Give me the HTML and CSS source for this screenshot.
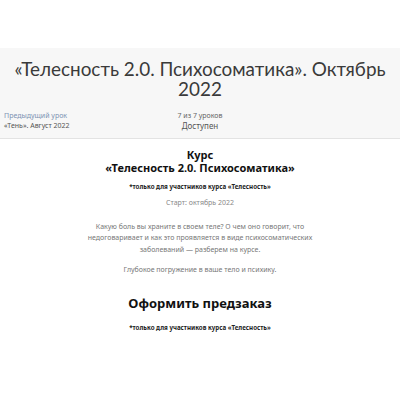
FILE: index.html
```html
<!DOCTYPE html>
<html lang="ru">
<head>
<meta charset="utf-8">
<link rel="stylesheet" href="styles.css">
</head>
<body>
<div class="top-space"></div>
<header class="lesson-head">
  <h1 class="lesson-title">«Телесность 2.0. Психосоматика». Октябрь 2022</h1>
  <div class="lesson-nav">
    <div class="nav-prev">
      <div class="nav-label">Предыдущий урок</div>
      <div class="nav-name">«Тень». Август 2022</div>
    </div>
    <div class="nav-status">
      <div class="status-count">7 из 7 уроков</div>
      <div class="status-state">Доступен</div>
    </div>
    <div class="nav-next"></div>
  </div>
</header>
<main class="content">
  <h2 class="course-title">Курс<br>«Телесность 2.0. Психосоматика»</h2>
  <p class="note">*только для участников курса «Телесность»</p>
  <p class="start">Старт: октябрь 2022</p>
  <p class="desc">Какую боль вы храните в своем теле? О чем оно говорит, что недоговаривает и как это проявляется в виде психосоматических заболеваний — разберем на курсе.</p>
  <p class="desc desc-second">Глубокое погружение в ваше тело и психику.</p>
  <h2 class="order-title">Оформить предзаказ</h2>
  <p class="note note-last">*только для участников курса «Телесность»</p>
</main>
</body>
</html>
```
FILE: styles.css
```css
html, body {
  margin: 0;
  padding: 0;
  background: #ffffff;
  font-family: "Noto Sans", "Open Sans", sans-serif;
  color: #333;
}
.top-space {
  height: 48px;
}
.lesson-head {
  background: #f7f7f7;
  border-bottom: 1px solid #e3e3e3;
  padding: 11px 4px 7px;
}
.lesson-title {
  margin: 0;
  text-align: center;
  font-family: "Lato", "Noto Sans", sans-serif;
  font-weight: 400;
  font-size: 18.9px;
  line-height: 20px;
  color: #3a3a3a;
}
.lesson-nav {
  display: grid;
  grid-template-columns: 1fr auto 1fr;
  margin-top: 12px;
  font-size: 7px;
  line-height: 10px;
}
.nav-label {
  color: #7d93b3;
}
.nav-name {
  color: #555;
}
.nav-status {
  text-align: center;
  color: #666;
}
.status-state {
  font-size: 8px;
  color: #555;
  margin-top: 0;
}
.content {
  text-align: center;
  padding-top: 8.5px;
}
.course-title {
  margin: 0;
  font-size: 11px;
  line-height: 13px;
  font-weight: 700;
  color: #111;
}
.note {
  margin: 8px 0 0;
  font-size: 6.2px;
  line-height: 10px;
  font-weight: 700;
  color: #222;
}
.start {
  margin: 6px 0 0;
  font-size: 7px;
  line-height: 10px;
  color: #888;
}
.desc {
  margin: 13px auto 0;
  width: 230px;
  font-size: 7px;
  line-height: 11.5px;
  color: #777;
}
.desc-second {
  margin-top: 8.5px;
}
.order-title {
  margin: 18.5px 0 0;
  font-size: 13px;
  line-height: 18px;
  font-weight: 700;
  color: #111;
}
.note-last {
  margin-top: 11px;
}
```
